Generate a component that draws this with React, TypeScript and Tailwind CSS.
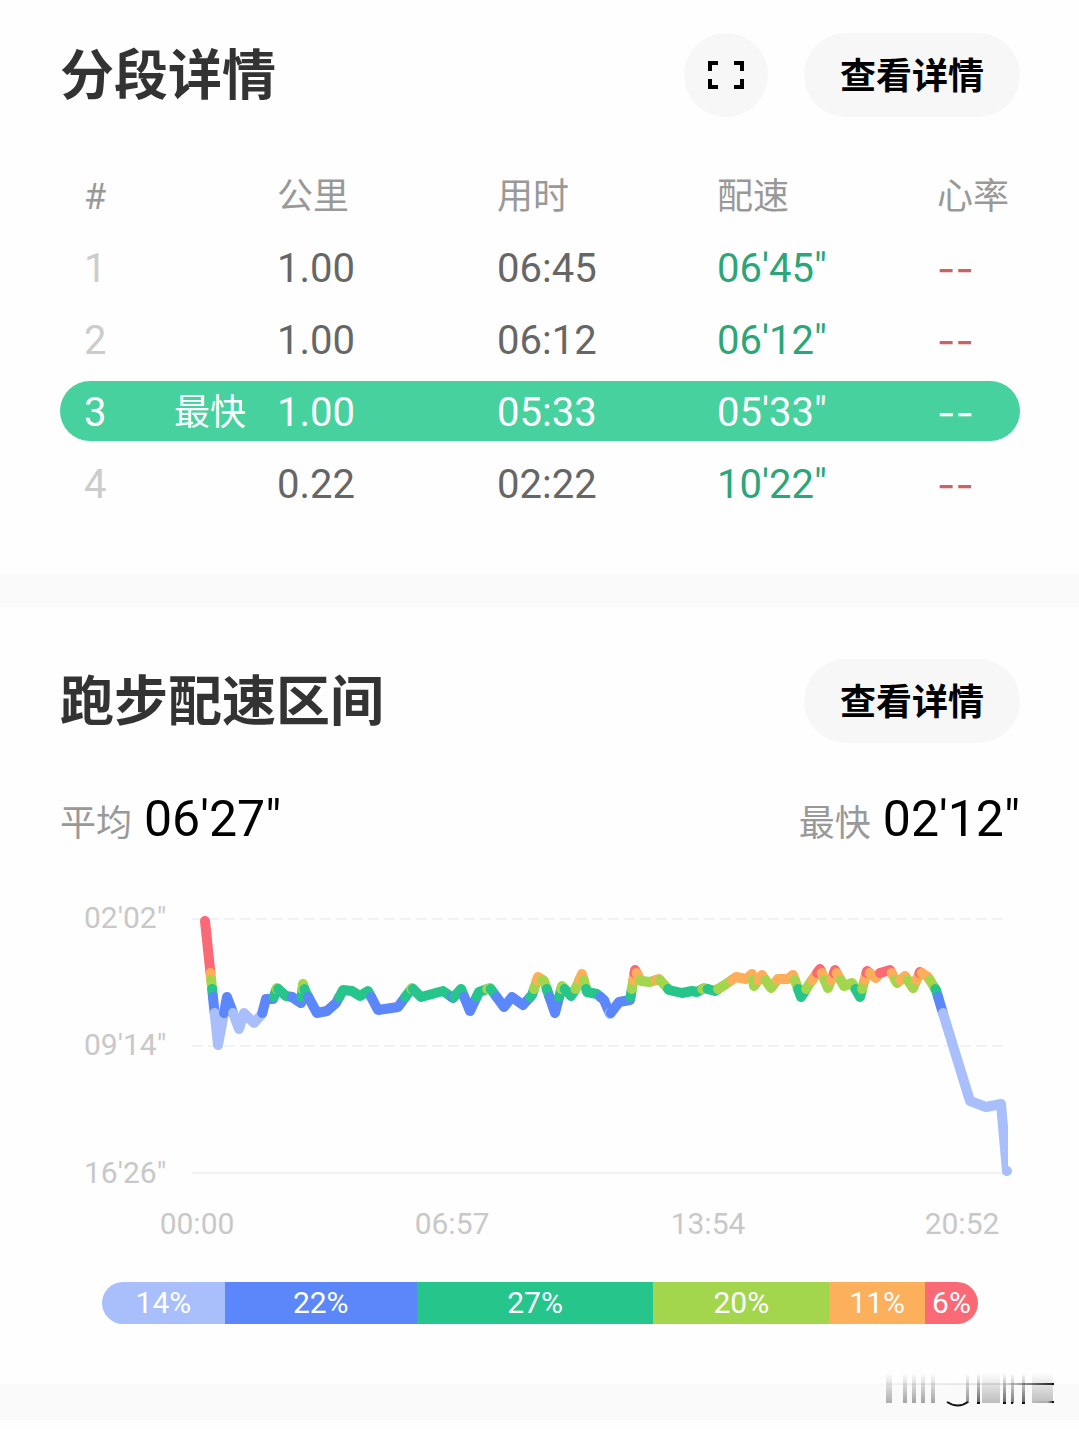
import React from "react";

const RED = "#f96976";
const ORANGE = "#fdae5a";
const LIME = "#a3d64d";
const GREEN = "#25c58b";
const BLUE = "#5b87fb";
const PALE = "#a8bffb";

const rows = [
  { n: "1", km: "1.00", time: "06:45", pace: "06'45\"", fastest: false },
  { n: "2", km: "1.00", time: "06:12", pace: "06'12\"", fastest: false },
  { n: "3", km: "1.00", time: "05:33", pace: "05'33\"", fastest: true },
  { n: "4", km: "0.22", time: "02:22", pace: "10'22\"", fastest: false },
];

const zones = [
  { label: "14%", size: 123, color: "bg-[#a8bffb]" },
  { label: "22%", size: 192, color: "bg-[#5b87fb]" },
  { label: "27%", size: 237, color: "bg-[#25c58b]" },
  { label: "20%", size: 176, color: "bg-[#a3d64d]" },
  { label: "11%", size: 96, color: "bg-[#fdb05c]" },
  { label: "6%", size: 53, color: "bg-[#f96976]" },
];

type Point = [number, number];

const points: Point[] = [
  [205, 921], [218, 1045], [227, 997], [239, 1029], [244, 1013], [254, 1023], [262, 1014], [266, 999],
  [273, 999], [277, 988], [286, 996], [292, 997], [301, 1003], [303, 984], [305, 991], [317, 1013],
  [327, 1011], [336, 1003], [343, 990], [352, 991], [360, 996], [368, 991], [378, 1010], [398, 1007],
  [412, 988], [421, 997], [443, 991], [453, 998], [461, 989], [470, 1011], [479, 992], [490, 988],
  [504, 1007], [512, 997], [523, 1005], [532, 995], [538, 977], [544, 981], [555, 1013], [562, 986],
  [571, 996], [575, 990], [582, 974], [587, 992], [597, 994], [604, 1000], [610, 1014], [619, 1002],
  [630, 1000], [635, 970], [641, 981], [650, 982], [659, 979], [669, 990], [682, 993], [692, 991],
  [697, 992], [704, 988], [715, 991], [726, 984], [736, 977], [746, 979], [752, 974], [754, 986],
  [762, 975], [771, 988], [778, 979], [788, 979], [793, 975], [801, 997], [810, 983], [820, 969],
  [828, 988], [835, 970], [844, 986], [852, 983], [860, 997], [867, 971], [876, 978], [880, 973],
  [890, 970], [897, 983], [905, 976], [913, 988], [920, 972], [928, 977], [936, 990], [942, 1010],
  [970, 1101], [986, 1107], [1001, 1104], [1007, 1171],
];

const limits = [973, 980, 989, 997, 1013];
const colors = [RED, ORANGE, LIME, GREEN, BLUE, PALE];

function zoneOf(y: number) {
  const i = limits.findIndex((l) => y < l);
  return i === -1 ? limits.length : i;
}

// Splits the pace line wherever it crosses a zone limit, one run per colour.
function splitByZone(all: Point[]) {
  const runs: { zone: number; pts: Point[] }[] = [];
  for (let i = 1; i < all.length; i++) {
    const [x0, y0] = all[i - 1];
    const [x1, y1] = all[i];
    const cuts = limits
      .map((l) => (y1 === y0 ? -1 : (l - y0) / (y1 - y0)))
      .filter((t) => t > 0 && t < 1)
      .sort((a, b) => a - b);
    const stops = [0, ...cuts, 1];
    for (let k = 1; k < stops.length; k++) {
      const at = (t: number): Point => [x0 + (x1 - x0) * t, y0 + (y1 - y0) * t];
      const a = at(stops[k - 1]);
      const b = at(stops[k]);
      const zone = zoneOf((a[1] + b[1]) / 2);
      const last = runs[runs.length - 1];
      if (last && last.zone === zone) last.pts.push(b);
      else runs.push({ zone, pts: [a, b] });
    }
  }
  return runs;
}

const runs = splitByZone(points);

function DetailButton() {
  return (
    <button className="h-[84px] rounded-full bg-[#f7f7f7] px-9 pt-1 text-[36px] leading-none font-bold text-black">
      查看详情
    </button>
  );
}

function PaceChart() {
  return (
    <svg viewBox="60 880 960 370" className="block w-full" role="img" aria-label="配速">
      <defs>
        <clipPath id="plot">
          <rect x="190" y="900" width="818" height="280" />
        </clipPath>
      </defs>
      <g stroke="#f2f2f2" strokeWidth="2">
        <path d="M192 919H1008" strokeDasharray="11 5" />
        <path d="M192 1046H1008" strokeDasharray="11 5" />
        <path d="M192 1173H1008" />
      </g>
      <g clipPath="url(#plot)" fill="none" strokeWidth="10" strokeLinecap="round" strokeLinejoin="round">
        {runs.map((r, i) => (
          <polyline key={i} points={r.pts.map((p) => p.join(",")).join(" ")} stroke={colors[r.zone]} />
        ))}
      </g>
      <circle cx="1007" cy="1171" r="5" fill={PALE} />
      <g fill="#c8c8c8" fontSize="30">
        <text x="84" y="928">02'02"</text>
        <text x="84" y="1055">09'14"</text>
        <text x="84" y="1183">16'26"</text>
        <g textAnchor="middle">
          <text x="197" y="1234">00:00</text>
          <text x="452" y="1234">06:57</text>
          <text x="708" y="1234">13:54</text>
          <text x="962" y="1234">20:52</text>
        </g>
      </g>
    </svg>
  );
}

function Watermark() {
  const bars = [
    [1, 6, 0.35], [18, 4, 0.4], [27, 4, 0.4], [36, 4, 0.4], [46, 4, 0.4], [81, 3, 0.5],
    [92, 3, 0.7], [97, 18, 0.28], [118, 3, 0.7], [126, 3, 0.6], [137, 3, 0.7], [147, 21, 0.28],
  ];
  return (
    <svg viewBox="0 0 172 38" className="absolute right-[22px] bottom-[20px] h-[38px] w-[172px]" aria-hidden="true">
      <defs>
        <linearGradient id="fade" x1="0" y1="0" x2="0" y2="1">
          <stop offset="0" stopColor="#222" stopOpacity="0" />
          <stop offset="1" stopColor="#222" />
        </linearGradient>
        <linearGradient id="sweep" x1="0" y1="0" x2="1" y2="0">
          <stop offset="0" stopColor="#222" stopOpacity="0.04" />
          <stop offset="0.7" stopColor="#222" stopOpacity="0.12" />
          <stop offset="1" stopColor="#222" />
        </linearGradient>
      </defs>
      {bars.map(([x, w, o]) => (
        <rect key={x} x={x} y="2" width={w} height="30" fill="url(#fade)" opacity={o} />
      ))}
      <path d="M62 31Q73 38 83 31" fill="none" stroke="#111" strokeWidth="2" />
      <rect x="1" y="12" width="168" height="2" fill="url(#sweep)" />
      <rect x="147" y="30" width="22" height="2" fill="url(#sweep)" />
      <path d="M92 32h3M118 32h3M126 32h2M137 32h3M167 31h2M167 13h2" stroke="#111" strokeWidth="2" />
    </svg>
  );
}

export default function App() {
  return (
    <main className="min-h-screen bg-[#fefefe] font-[Roboto,'Noto_Sans_CJK_SC',sans-serif]">
      <section className="pt-[33px] pr-[59px] pb-[55px] pl-[60px]">
        <header className="flex items-center gap-9">
          <h2 className="mr-auto pt-1 text-[54px] leading-none font-bold text-[#333]">分段详情</h2>
          <button
            aria-label="全屏"
            className="flex size-[84px] items-center justify-center rounded-full bg-[#f7f7f7]"
          >
            <svg viewBox="0 0 36 28" className="h-7 w-9" fill="none" stroke="#000" strokeWidth="4">
              <path d="M2 10V2H10M26 2H34V10M34 18V26H26M10 26H2V18" />
            </svg>
          </button>
          <DetailButton />
        </header>
        <table className="mt-[42px] w-full table-fixed border-collapse text-left text-[40px] leading-none">
          <colgroup>
            <col className="w-[114px]" />
            <col className="w-[103px]" />
            <col className="w-[220px]" />
            <col className="w-[220px]" />
            <col className="w-[220px]" />
            <col className="w-[83px]" />
          </colgroup>
          <thead>
            <tr className="h-[72px] text-[36px] text-[#999]">
              <th className="p-0 pt-1 pl-6 font-normal">#</th>
              <th className="p-0 pt-1" aria-label="标记" />
              <th className="p-0 pt-1 font-normal">公里</th>
              <th className="p-0 pt-1 font-normal">用时</th>
              <th className="p-0 pt-1 font-normal">配速</th>
              <th className="p-0 pt-1 font-normal">心率</th>
            </tr>
          </thead>
          <tbody>
            {rows.map((r) => {
              const cell = r.fastest
                ? "flex h-[60px] items-center bg-[#46d19e] pt-1 text-white"
                : "flex h-[60px] items-center pt-1";
              return (
                <tr key={r.n}>
                  <td className="px-0 py-1.5">
                    <div className={`${cell} rounded-l-full pl-6 ${r.fastest ? "" : "text-[#ccc]"}`}>{r.n}</div>
                  </td>
                  <td className="px-0 py-1.5">
                    <div className={`${cell} text-[36px]`}>{r.fastest ? "最快" : ""}</div>
                  </td>
                  <td className="px-0 py-1.5">
                    <div className={`${cell} ${r.fastest ? "" : "text-[#666]"}`}>{r.km}</div>
                  </td>
                  <td className="px-0 py-1.5">
                    <div className={`${cell} ${r.fastest ? "" : "text-[#666]"}`}>{r.time}</div>
                  </td>
                  <td className="px-0 py-1.5">
                    <div className={`${cell} ${r.fastest ? "" : "text-[#2ba679]"}`}>{r.pace}</div>
                  </td>
                  <td className="px-0 py-1.5">
                    <div className={`${cell} rounded-r-full font-[Inter,sans-serif] ${r.fastest ? "" : "text-[#c96464]"}`}>
                      --
                    </div>
                  </td>
                </tr>
              );
            })}
          </tbody>
        </table>
      </section>

      <div className="h-[33px] bg-[#fafafa]" />

      <section className="pt-[52px] pr-[59px] pb-[60px] pl-[60px]">
        <header className="flex items-center justify-between">
          <h2 className="pt-1 text-[54px] leading-none font-bold text-[#333]">跑步配速区间</h2>
          <DetailButton />
        </header>
        <div className="mt-[46px] flex justify-between text-[36px] leading-[60px] text-[#999]">
          <p className="flex items-baseline gap-3">
            平均 <span className="text-[50px] text-black">06'27"</span>
          </p>
          <p className="flex items-baseline gap-3">
            最快 <span className="text-[50px] text-black">02'12"</span>
          </p>
        </div>
        <div className="mt-[26px]">
          <PaceChart />
        </div>
        <div className="mr-[42px] ml-[42px] mt-8 flex h-[42px] overflow-hidden rounded-full text-[30px] leading-[42px] text-white">
          {zones.map((z) => (
            <div
              key={z.label}
              className={`flex min-w-0 basis-0 justify-center ${z.color}`}
              style={{ flexGrow: z.size }}
            >
              {z.label}
            </div>
          ))}
        </div>
      </section>

      <footer className="relative pb-[9px]">
        <div className="h-9 bg-[#fafafa]" />
        <Watermark />
      </footer>
    </main>
  );
}
